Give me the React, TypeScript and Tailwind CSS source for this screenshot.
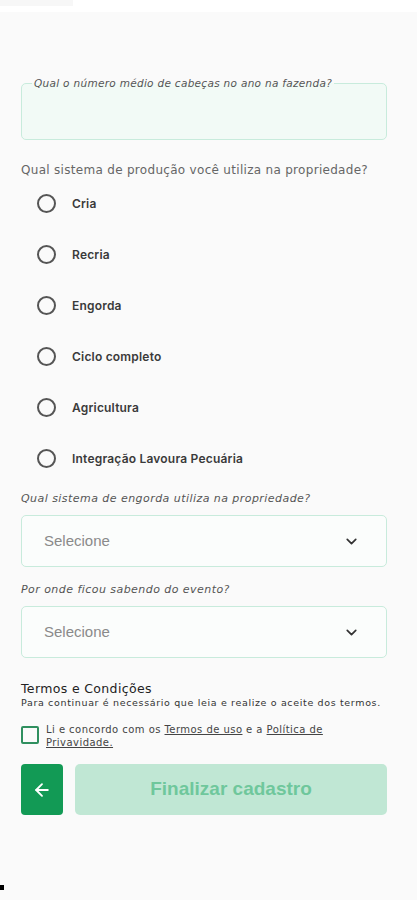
import { ArrowLeft, ChevronDown } from 'lucide-react'

const body = { fontFamily: '"DejaVu Sans", "Open Sans", sans-serif' }
const arial = { fontFamily: '"Liberation Sans", Arial, sans-serif' }
const inter = { fontFamily: 'Inter, "DejaVu Sans", sans-serif' }

const systems = ['Cria', 'Recria', 'Engorda', 'Ciclo completo', 'Agricultura', 'Integração Lavoura Pecuária']

function SelectBox({ label, first }: { label: string; first?: boolean }) {
  return (
    <div className={first ? 'mt-[8px]' : 'mt-[16px]'}>
      <div className="text-[11px] italic tracking-[0.45px] text-[#555] leading-[14px]" style={body}>
        {label}
      </div>
      <div className="mt-[9px] flex h-[52px] items-center justify-between rounded-[5px] border-[1.5px] border-[#c8ebdc] bg-[#fbfdfc] pl-[22px] pr-[26px]">
        <span className="text-[15px] text-[#8a8a8a]" style={arial}>
          Selecione
        </span>
        <ChevronDown className="h-[17px] w-[17px] text-[#333]" strokeWidth={2.4} />
      </div>
    </div>
  )
}

export default function App() {
  return (
    <div className="relative min-h-[900px] w-[417px] bg-[#fafafa]" style={body}>
      <div className="flex h-[12px] bg-white">
        <div className="h-[6px] w-[73px] bg-[#f7f7f7]" />
      </div>

      <div className="pl-[21px] pr-[30px] pt-[65px]">
        <fieldset className="h-[63px] rounded-[5px] border-[1.5px] border-[#c8ebdc] bg-[#f2faf6] px-[10px]">
          <legend className="px-[2px] text-[10.5px] italic tracking-[0.3px] text-[#555] leading-[12px]">
            Qual o número médio de cabeças no ano na fazenda?
          </legend>
        </fieldset>

        <div className="mt-[22px] text-[12px] tracking-[0.3px] text-[#666] leading-[16px]">
          Qual sistema de produção você utiliza na propriedade?
        </div>

        <div className="flex flex-col">
          {systems.map((s) => (
            <label key={s} className="flex h-[51px] items-center pl-[16px]">
              <span className="h-[19px] w-[19px] rounded-full border-[2px] border-[#555]" />
              <span className="ml-[16px] text-[12px] font-semibold tracking-[0.2px] text-[#3a3a3a]" style={inter}>
                {s}
              </span>
            </label>
          ))}
        </div>

        <SelectBox first label="Qual sistema de engorda utiliza na propriedade?" />
        <SelectBox label="Por onde ficou sabendo do evento?" />

        <div className="mt-[23px] text-[12.5px] tracking-[0.35px] text-[#222] leading-[15px]">Termos e Condições</div>
        <div className="text-[9.5px] tracking-[0.65px] text-[#333] leading-[13px]">
          Para continuar é necessário que leia e realize o aceite dos termos.
        </div>

        <div className="mt-[14px] flex items-start gap-[7px]">
          <span className="mt-[3px] h-[18px] w-[18px] shrink-0 rounded-[2px] border-[2px] border-[#2f8f5f]" />
          <p className="text-[10px] tracking-[0.45px] text-[#444] leading-[13px]">
            Li e concordo com os <span className="underline">Termos de uso</span> e a{' '}
            <span className="underline">Política de</span>
            <br />
            <span className="underline">Privavidade.</span>
          </p>
        </div>

        <div className="mt-[15px] flex gap-[12px]">
          <button className="flex h-[51px] w-[42px] shrink-0 items-center justify-center rounded-[4px] bg-[#129a55]">
            <ArrowLeft className="h-[20px] w-[20px] text-white" strokeWidth={2.2} />
          </button>
          <button
            className="flex h-[51px] flex-1 items-center justify-center rounded-[5px] bg-[#c0e7d4] text-[19px] font-bold text-[#6fc79c]"
            style={arial}
          >
            Finalizar cadastro
          </button>
        </div>
      </div>

      <div className="absolute left-0 top-[885px] h-[5px] w-[4px] bg-black" />
    </div>
  )
}
